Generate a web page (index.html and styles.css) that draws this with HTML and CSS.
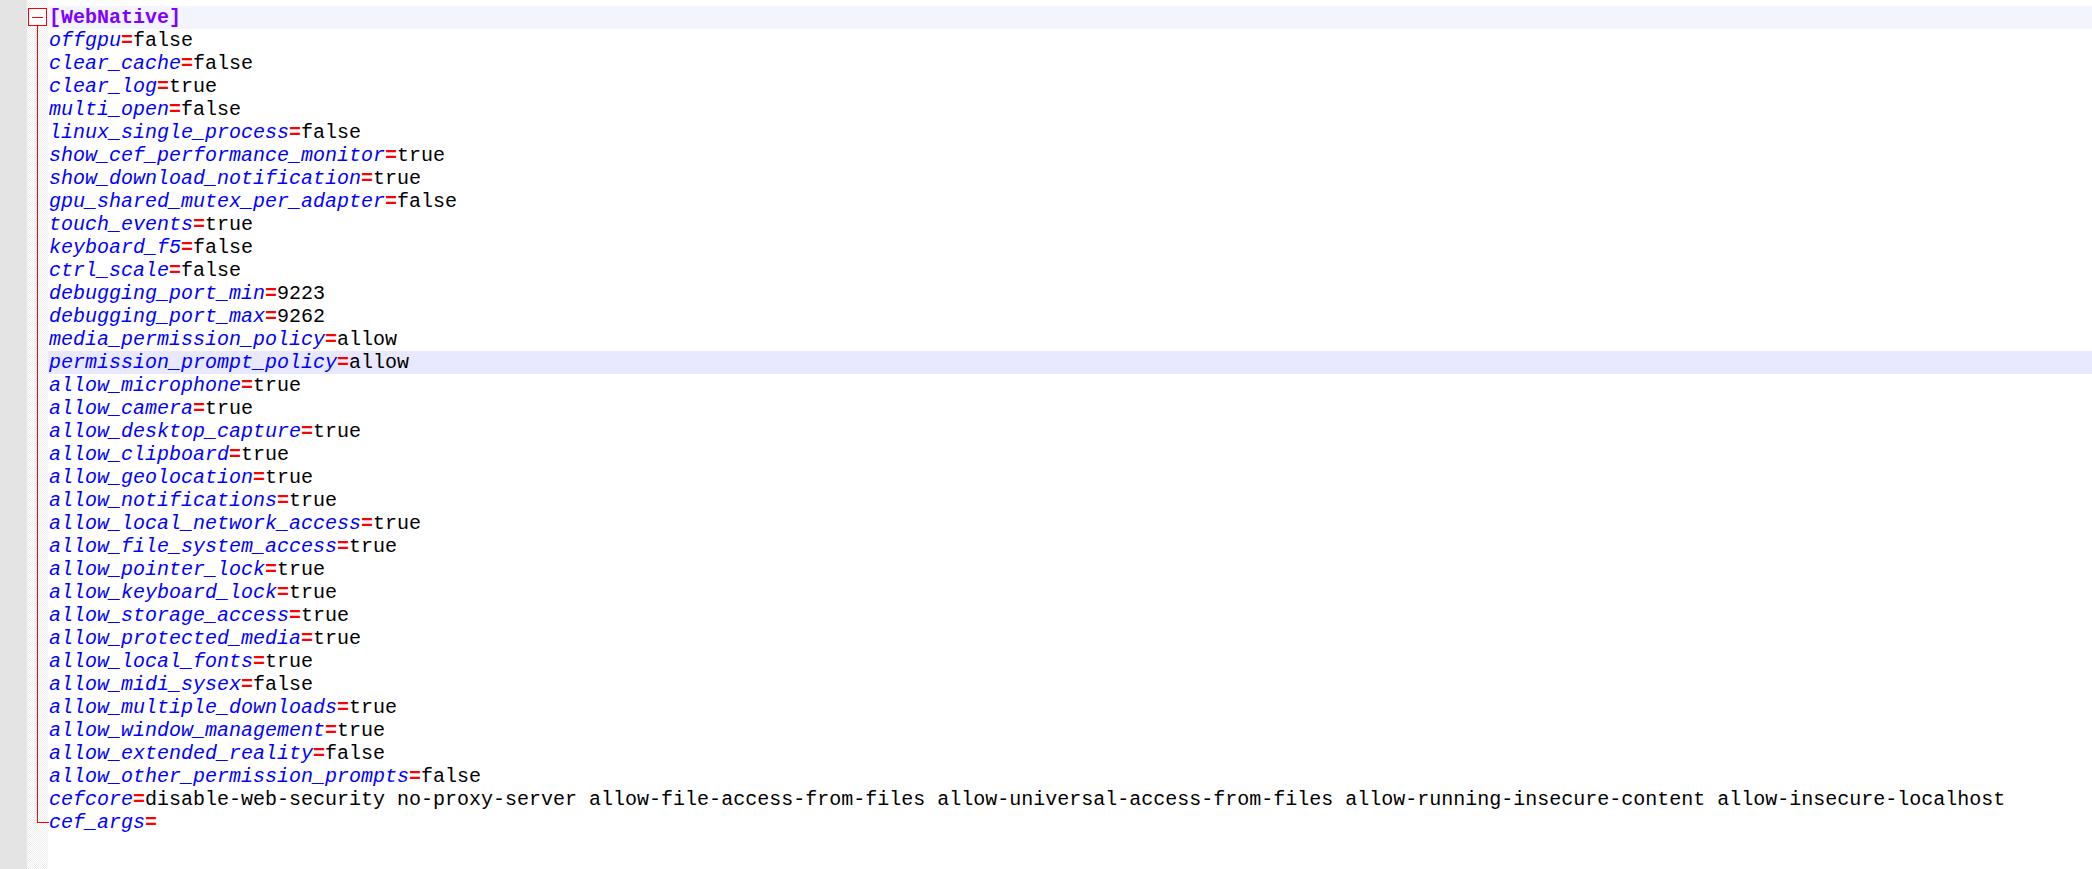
FILE: index.html
```html
<!DOCTYPE html>
<html>
<head>
<meta charset="utf-8">
<link rel="stylesheet" href="styles.css">
</head>
<body>
<div class="editor">
  <div class="gutter"></div>
  <div class="fold">
    <div class="fcell"><span class="fbox"><span class="fminus"></span></span></div>
  </div>
  <div class="code">
    <div class="line header"><span class="sec">[WebNative]</span></div>
    <div class="line"><span class="k">offgpu</span><span class="eq">=</span>false</div>
    <div class="line"><span class="k">clear_cache</span><span class="eq">=</span>false</div>
    <div class="line"><span class="k">clear_log</span><span class="eq">=</span>true</div>
    <div class="line"><span class="k">multi_open</span><span class="eq">=</span>false</div>
    <div class="line"><span class="k">linux_single_process</span><span class="eq">=</span>false</div>
    <div class="line"><span class="k">show_cef_performance_monitor</span><span class="eq">=</span>true</div>
    <div class="line"><span class="k">show_download_notification</span><span class="eq">=</span>true</div>
    <div class="line"><span class="k">gpu_shared_mutex_per_adapter</span><span class="eq">=</span>false</div>
    <div class="line"><span class="k">touch_events</span><span class="eq">=</span>true</div>
    <div class="line"><span class="k">keyboard_f5</span><span class="eq">=</span>false</div>
    <div class="line"><span class="k">ctrl_scale</span><span class="eq">=</span>false</div>
    <div class="line"><span class="k">debugging_port_min</span><span class="eq">=</span>9223</div>
    <div class="line"><span class="k">debugging_port_max</span><span class="eq">=</span>9262</div>
    <div class="line"><span class="k">media_permission_policy</span><span class="eq">=</span>allow</div>
    <div class="line current"><span class="k">permission_prompt_policy</span><span class="eq">=</span>allow</div>
    <div class="line"><span class="k">allow_microphone</span><span class="eq">=</span>true</div>
    <div class="line"><span class="k">allow_camera</span><span class="eq">=</span>true</div>
    <div class="line"><span class="k">allow_desktop_capture</span><span class="eq">=</span>true</div>
    <div class="line"><span class="k">allow_clipboard</span><span class="eq">=</span>true</div>
    <div class="line"><span class="k">allow_geolocation</span><span class="eq">=</span>true</div>
    <div class="line"><span class="k">allow_notifications</span><span class="eq">=</span>true</div>
    <div class="line"><span class="k">allow_local_network_access</span><span class="eq">=</span>true</div>
    <div class="line"><span class="k">allow_file_system_access</span><span class="eq">=</span>true</div>
    <div class="line"><span class="k">allow_pointer_lock</span><span class="eq">=</span>true</div>
    <div class="line"><span class="k">allow_keyboard_lock</span><span class="eq">=</span>true</div>
    <div class="line"><span class="k">allow_storage_access</span><span class="eq">=</span>true</div>
    <div class="line"><span class="k">allow_protected_media</span><span class="eq">=</span>true</div>
    <div class="line"><span class="k">allow_local_fonts</span><span class="eq">=</span>true</div>
    <div class="line"><span class="k">allow_midi_sysex</span><span class="eq">=</span>false</div>
    <div class="line"><span class="k">allow_multiple_downloads</span><span class="eq">=</span>true</div>
    <div class="line"><span class="k">allow_window_management</span><span class="eq">=</span>true</div>
    <div class="line"><span class="k">allow_extended_reality</span><span class="eq">=</span>false</div>
    <div class="line"><span class="k">allow_other_permission_prompts</span><span class="eq">=</span>false</div>
    <div class="line"><span class="k">cefcore</span><span class="eq">=</span>disable-web-security no-proxy-server allow-file-access-from-files allow-universal-access-from-files allow-running-insecure-content allow-insecure-localhost</div>
    <div class="line"><span class="k">cef_args</span><span class="eq">=</span></div>
  </div>
</div>
</body>
</html>
```
FILE: styles.css
```css
html, body {
  margin: 0;
  padding: 0;
  background: #ffffff;
  height: 100%;
  overflow: hidden;
}
.editor {
  display: flex;
  height: 869px;
}
.gutter {
  width: 27px;
  flex: none;
  background: #e4e4e4;
}
.fold {
  width: 21px;
  flex: none;
  padding-top: 6px;
  box-sizing: border-box;
  background: repeating-conic-gradient(#ececec 0 25%, #ffffff 0 50%) 0 0 / 2px 2px;
  position: relative;
}
.fcell {
  height: 805px;
  margin-left: 10px;
  margin-right: 0;
  border-left: 1px solid #ff0000;
  border-bottom: 1px solid #ff0000;
  width: 11px;
  position: relative;
  margin-top: 11px;
}
.fbox {
  position: absolute;
  left: -10px;
  top: -9px;
  width: 17px;
  height: 16px;
  border: 1px solid #ff0000;
  background: #ffffff;
}
.fminus {
  position: absolute;
  left: 3px;
  right: 3px;
  top: 8px;
  height: 1px;
  background: #ff0000;
}
.code {
  flex: 1;
  padding-top: 6px;
  font-family: "Liberation Mono", monospace;
  font-size: 20px;
  color: #000000;
}
.line {
  height: 23px;
  line-height: 23px;
  padding-left: 1px;
  white-space: pre;
}
.header {
  background: #f2f4ff;
}
.current {
  background: #e8e8ff;
}
.sec {
  color: #8000ff;
  font-weight: bold;
}
.k {
  color: #0000ff;
  font-style: italic;
}
.eq {
  color: #ff0000;
  font-weight: bold;
}
```
